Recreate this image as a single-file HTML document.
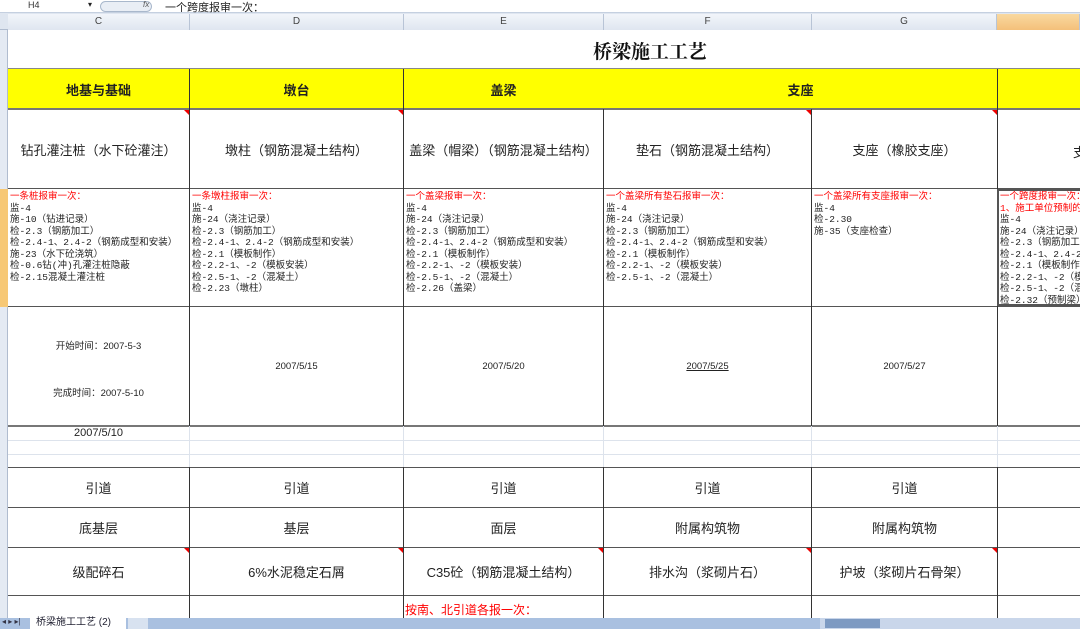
<!DOCTYPE html><html><head><meta charset="utf-8"><style>
*{margin:0;padding:0;box-sizing:border-box}
body{width:1080px;height:629px;overflow:hidden;background:#fff;position:relative;font-family:"Liberation Sans","Noto Sans CJK SC",sans-serif;color:#222}
div{position:absolute}
.h{height:1px;background:#555}
.hl{height:1px;background:#dde3ec}
.v{width:1px;background:#333}
.c{display:flex;align-items:center;justify-content:center;text-align:center;font-size:13px}
.t{font-size:9.5px;line-height:11.5px;white-space:pre;font-family:"Liberation Mono","Noto Sans CJK SC",monospace}
.r{color:#f00}
.tri{width:0;height:0;border-top:5px solid #e00;border-left:5px solid transparent}
.ch{top:14px;height:16px;font-size:10px;color:#444;text-align:center;line-height:16px;background:linear-gradient(#f2f5fa,#dfe6f0);border-right:1px solid #b8c4d6}
</style></head><body>
<!-- formula bar -->
<div style="left:0;top:0;width:1080px;height:13px;background:#fff;border-bottom:1px solid #c5d0e0"></div>
<div style="left:28px;top:0;font-size:9px;color:#333">H4</div>
<div style="left:88px;top:0;font-size:8px">▾</div>
<div style="left:100px;top:1px;width:52px;height:11px;border:1px solid #a9b8cc;border-radius:6px;background:#e9eef5"></div>
<div style="left:143px;top:0;font-size:8px;font-style:italic;color:#555">fx</div>
<div style="left:165px;top:-1px;font-size:11px;color:#222">一个跨度报审一次：</div>
<!-- col headers -->
<div style="left:0;top:13px;width:1080px;height:17px;background:#dfe6f0;border-bottom:1px solid #b0bccf"></div>
<div class="ch" style="left:8px;width:182px">C</div>
<div class="ch" style="left:190px;width:214px">D</div>
<div class="ch" style="left:404px;width:200px">E</div>
<div class="ch" style="left:604px;width:208px">F</div>
<div class="ch" style="left:812px;width:185px">G</div>
<div class="ch" style="left:997px;width:83px;background:linear-gradient(#f9d9a0,#f4c07a)"></div>
<!-- row header strip -->
<div style="left:0;top:30px;width:8px;height:588px;background:#e4eaf3;border-right:1px solid #b0bccf"></div>
<div style="left:0;top:189px;width:8px;height:118px;background:#f7c875"></div>
<!-- title -->
<div style="left:540px;top:37px;width:220px;font-size:19px;font-weight:bold;font-family:'Liberation Serif','Noto Serif CJK SC',serif;color:#111;text-align:center">桥梁施工工艺</div>
<!-- yellow row -->
<div style="left:8px;top:69px;width:1072px;height:40px;background:#ff0"></div>
<div class="c" style="left:8px;top:69px;width:181px;height:40px;font-weight:bold;font-size:13px">地基与基础</div>
<div class="c" style="left:190px;top:69px;width:213px;height:40px;font-weight:bold">墩台</div>
<div class="c" style="left:404px;top:69px;width:199px;height:40px;font-weight:bold">盖梁</div>
<div class="c" style="left:604px;top:69px;width:393px;height:40px;font-weight:bold">支座</div>
<!-- horizontal lines -->
<div class="h" style="left:8px;top:68px;width:1072px;background:#888"></div>
<div class="h" style="left:8px;top:108px;width:1072px;height:2px;background:#777"></div>
<div class="h" style="left:8px;top:188px;width:1072px"></div>
<div class="h" style="left:8px;top:306px;width:1072px"></div>
<div class="h" style="left:8px;top:425px;width:1072px;height:2px;background:#777"></div>
<div class="hl" style="left:8px;top:440px;width:1072px"></div>
<div class="hl" style="left:8px;top:454px;width:1072px"></div>
<div class="h" style="left:8px;top:467px;width:1072px"></div>
<div class="h" style="left:8px;top:507px;width:1072px"></div>
<div class="h" style="left:8px;top:547px;width:1072px"></div>
<div class="h" style="left:8px;top:595px;width:1072px"></div>
<!-- vertical lines -->
<div class="v" style="left:189px;top:69px;height:357px"></div>
<div class="v" style="left:403px;top:69px;height:357px"></div>
<div class="v" style="left:603px;top:109px;height:317px"></div>
<div class="v" style="left:811px;top:109px;height:317px"></div>
<div class="v" style="left:997px;top:69px;height:357px"></div>
<div class="v" style="left:189px;top:426px;height:41px;background:#dde3ec"></div>
<div class="v" style="left:403px;top:426px;height:41px;background:#dde3ec"></div>
<div class="v" style="left:603px;top:426px;height:41px;background:#dde3ec"></div>
<div class="v" style="left:811px;top:426px;height:41px;background:#dde3ec"></div>
<div class="v" style="left:997px;top:426px;height:41px;background:#dde3ec"></div>
<div class="v" style="left:189px;top:467px;height:151px"></div>
<div class="v" style="left:403px;top:467px;height:151px"></div>
<div class="v" style="left:603px;top:467px;height:151px"></div>
<div class="v" style="left:811px;top:467px;height:151px"></div>
<div class="v" style="left:997px;top:467px;height:151px"></div>
<!-- red triangles -->
<div class="tri" style="left:184px;top:110px"></div>
<div class="tri" style="left:398px;top:110px"></div>
<div class="tri" style="left:806px;top:110px"></div>
<div class="tri" style="left:992px;top:110px"></div>
<div class="tri" style="left:184px;top:548px"></div>
<div class="tri" style="left:398px;top:548px"></div>
<div class="tri" style="left:598px;top:548px"></div>
<div class="tri" style="left:806px;top:548px"></div>
<div class="tri" style="left:992px;top:548px"></div>
<!-- row 109 -->
<div class="c" style="left:8px;top:110px;width:181px;height:78px">钻孔灌注桩（水下砼灌注）</div>
<div class="c" style="left:190px;top:110px;width:213px;height:78px">墩柱（钢筋混凝土结构）</div>
<div class="c" style="left:404px;top:110px;width:199px;height:78px">盖梁（帽梁）（钢筋混凝土结构）</div>
<div class="c" style="left:604px;top:110px;width:207px;height:78px">垫石（钢筋混凝土结构）</div>
<div class="c" style="left:812px;top:110px;width:185px;height:78px">支座（橡胶支座）</div>
<div style="left:1073px;top:142px;font-size:13px">支</div>
<!-- row 189 text -->
<div class="t" style="left:10px;top:191px"><span class="r">一条桩报审一次：</span>
监-4
施-10（钻进记录）
检-2.3（钢筋加工）
检-2.4-1、2.4-2（钢筋成型和安装）
施-23（水下砼浇筑）
检-0.6钻(冲)孔灌注桩隐蔽
检-2.15混凝土灌注桩</div>
<div class="t" style="left:192px;top:191px"><span class="r">一条墩柱报审一次：</span>
监-4
施-24（浇注记录）
检-2.3（钢筋加工）
检-2.4-1、2.4-2（钢筋成型和安装）
检-2.1（模板制作）
检-2.2-1、-2（模板安装）
检-2.5-1、-2（混凝土）
检-2.23（墩柱）</div>
<div class="t" style="left:406px;top:191px;width:197px;overflow:hidden"><span class="r">一个盖梁报审一次：</span>
监-4
施-24（浇注记录）
检-2.3（钢筋加工）
检-2.4-1、2.4-2（钢筋成型和安装）
检-2.1（模板制作）
检-2.2-1、-2（模板安装）
检-2.5-1、-2（混凝土）
检-2.26（盖梁）</div>
<div class="t" style="left:606px;top:191px"><span class="r">一个盖梁所有垫石报审一次：</span>
监-4
施-24（浇注记录）
检-2.3（钢筋加工）
检-2.4-1、2.4-2（钢筋成型和安装）
检-2.1（模板制作）
检-2.2-1、-2（模板安装）
检-2.5-1、-2（混凝土）</div>
<div class="t" style="left:814px;top:191px"><span class="r">一个盖梁所有支座报审一次：</span>
监-4
检-2.30
施-35（支座检查）</div>
<div style="left:997px;top:189px;width:83px;height:117px;border:2px solid #555;border-right:none"></div>
<div class="t" style="left:1000px;top:191px;width:80px;overflow:hidden"><span class="r">一个跨度报审一次：
1、施工单位预制的</span>
监-4
施-24（浇注记录）
检-2.3（钢筋加工）
检-2.4-1、2.4-2
检-2.1（模板制作）
检-2.2-1、-2（模板
检-2.5-1、-2（混凝土
检-2.32（预制梁）</div>
<!-- dates row -->
<div style="left:8px;top:338px;width:181px;text-align:center;font-size:9.5px">开始时间：2007-5-3</div>
<div style="left:8px;top:385px;width:181px;text-align:center;font-size:9.5px">完成时间：2007-5-10</div>
<div class="c" style="left:190px;top:307px;width:213px;height:118px;font-size:9.5px">2007/5/15</div>
<div class="c" style="left:404px;top:307px;width:199px;height:118px;font-size:9.5px">2007/5/20</div>
<div class="c" style="left:604px;top:307px;width:207px;height:118px;font-size:9.5px;text-decoration:underline">2007/5/25</div>
<div class="c" style="left:812px;top:307px;width:185px;height:118px;font-size:9.5px">2007/5/27</div>
<div style="left:8px;top:427px;width:181px;text-align:center;font-size:11px">2007/5/10</div>
<!-- lower rows -->
<div class="c" style="left:8px;top:468px;width:181px;height:39px">引道</div>
<div class="c" style="left:190px;top:468px;width:213px;height:39px">引道</div>
<div class="c" style="left:404px;top:468px;width:199px;height:39px">引道</div>
<div class="c" style="left:604px;top:468px;width:207px;height:39px">引道</div>
<div class="c" style="left:812px;top:468px;width:185px;height:39px">引道</div>
<div class="c" style="left:8px;top:508px;width:181px;height:39px">底基层</div>
<div class="c" style="left:190px;top:508px;width:213px;height:39px">基层</div>
<div class="c" style="left:404px;top:508px;width:199px;height:39px">面层</div>
<div class="c" style="left:604px;top:508px;width:207px;height:39px">附属构筑物</div>
<div class="c" style="left:812px;top:508px;width:185px;height:39px">附属构筑物</div>
<div class="c" style="left:8px;top:548px;width:181px;height:47px">级配碎石</div>
<div class="c" style="left:190px;top:548px;width:213px;height:47px">6%水泥稳定石屑</div>
<div class="c" style="left:404px;top:548px;width:199px;height:47px">C35砼（钢筋混凝土结构）</div>
<div class="c" style="left:604px;top:548px;width:207px;height:47px">排水沟（浆砌片石）</div>
<div class="c" style="left:812px;top:548px;width:185px;height:47px">护坡（浆砌片石骨架）</div>
<div style="left:405px;top:601px;font-size:12px;color:#f00">按南、北引道各报一次：</div>
<!-- tab bar -->
<div style="left:0;top:618px;width:1080px;height:11px;background:#a9c0e0"></div>
<div style="left:2px;top:617px;font-size:8px;color:#334">◂ ▸ ▸|</div>
<div style="left:30px;top:617px;width:96px;height:12px;background:#fff;font-size:10px;line-height:12px;padding-left:6px;color:#223">桥梁施工工艺 (2)</div>
<div style="left:128px;top:618px;width:20px;height:11px;background:#d8e2f0"></div>
<div style="left:820px;top:618px;width:260px;height:11px;background:#c9d6ea"></div>
<div style="left:825px;top:619px;width:55px;height:9px;background:#7d9ac2"></div>
</body></html>
